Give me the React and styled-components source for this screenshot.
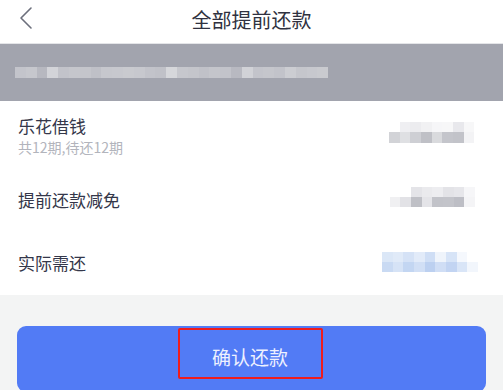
import React from "react";
import styled, { createGlobalStyle } from "styled-components";

const GlobalStyle = createGlobalStyle`
  html, body {
    margin: 0;
    padding: 0;
    background: #f3f4f4;
    font-family: "Noto Sans CJK SC", "Noto Sans", sans-serif;
  }
`;

const Page = styled.div`
  width: 503px;
  height: 390px;
  overflow: hidden;
  background: #f3f4f4;
`;

const Header = styled.div`
  height: 43px;
  background: #fff;
  border-bottom: 1px solid #e4e5e8;
  display: flex;
  align-items: center;
  justify-content: center;
  position: relative;
`;

const BackBtn = styled.div`
  position: absolute;
  left: 17px;
  top: 6px;
  width: 20px;
  height: 24px;
`;

const Title = styled.h1`
  margin: 0;
  font-size: 20px;
  font-weight: 400;
  color: #2f3140;
  line-height: 1;
  padding-bottom: 4px;
`;

const Banner = styled.div`
  height: 57px;
  background: #a2a4ae;
  display: flex;
  align-items: center;
  padding-left: 15px;
`;

const Card = styled.div`
  background: #fff;
  height: 194px;
  padding: 0 18px;
  display: flex;
  flex-direction: column;
`;

const Row = styled.div`
  height: ${(p) => p.h}px;
  display: flex;
  align-items: center;
  justify-content: space-between;
`;

const Label = styled.div`
  display: flex;
  flex-direction: column;
`;

const Name = styled.div`
  font-size: 17px;
  color: #34374a;
  line-height: 22px;
`;

const Sub = styled.div`
  font-size: 14px;
  color: #b2b4bc;
  line-height: 18px;
  margin-top: 1px;
`;

const Footer = styled.div`
  padding: 31px 17px 0;
`;

const ConfirmButton = styled.button`
  width: 469px;
  height: 66px;
  border: none;
  border-radius: 9px;
  background: #527bf5;
  display: flex;
  align-items: center;
  justify-content: center;
  padding: 0;
  font-family: inherit;
`;

const Highlight = styled.span`
  box-sizing: border-box;
  width: 145px;
  height: 51px;
  padding-top: 6px;
  border: 2px solid #ee1c1c;
  border-radius: 2px;
  display: flex;
  align-items: center;
  justify-content: center;
  color: #eef1ff;
  font-size: 19px;
  margin-top: -11px;
  margin-left: -3px;
`;

const MosaicGrid = styled.div`
  display: grid;
  grid-template-columns: repeat(${(p) => p.cols}, ${(p) => p.cw}px);
  grid-auto-rows: ${(p) => p.ch}px;
  filter: blur(0.6px);
  margin-right: ${(p) => p.mr || 0}px;
  margin-top: ${(p) => p.mt || 0}px;
`;

const Cell = styled.div`
  background: ${(p) => p.c};
`;

const Mosaic = ({ rows, cw, ch, mr, mt }) => (
  <MosaicGrid cols={rows[0].length} cw={cw} ch={ch} mr={mr} mt={mt}>
    {rows.flat().map((c, i) => (
      <Cell key={i} c={c} />
    ))}
  </MosaicGrid>
);

const bannerRow = [
  "#c3c4cb", "#c6c7cd", "#b7b8c0", "#d3d4d9", "#c2c3ca", "#c5c6cc", "#c4c5cb",
  "#bfc0c7", "#c6c7cd", "#c7c8ce", "#c9cacf", "#c7c8ce", "#c2c3ca", "#c0c1c8",
  "#d6d7db", "#c6c7cd", "#c4c5cb", "#c0c1c8", "#c4c5cb", "#c2c3ca", "#b8b9c1",
  "#d1d2d7", "#c3c4cb", "#c5c6cc", "#c2c3ca", "#cccdd2", "#c5c6cc", "#c7c8ce",
  "#c9cacf",
];

const W = "#ffffff";

const loanRows = [
  [W, "#efeff2", "#ececef", "#f1f1f3", "#f6f6f8", "#f7f7f8", "#e8e8ec", "#f7f7f8", W],
  ["#d2d3d7", "#dfe0e3", "#cecfd4", "#bfc0c6", "#d9dadd", "#c4c5cb", "#c2c3c9", "#f3f3f5", W],
];

const reliefRows = [
  [W, W, "#e4e4e8", "#eaeaed", "#ededf0", "#e3e3e7", "#e6e6ea", "#f6f6f8"],
  ["#f0f0f2", "#e2e2e6", "#bfc0c6", "#e4e4e8", "#c2c3c9", "#c3c4ca", "#bdbec5", "#f4f4f6"],
];

const dueRows = [
  ["#dbe7f7", "#e0eaf8", "#d5e2f6", "#e2ebf9", "#cfdef5", "#eff4fb", "#d7e4f7", "#f5f8fd", W],
  ["#c9daf3", "#d6e3f6", "#c3d6f2", "#d1dff5", "#bcd0f0", "#d0def5", "#c2d4f2", "#d9e5f7", "#f2f6fc"],
];

const ChevronLeft = () => (
  <svg width="20" height="24" viewBox="0 0 20 24">
    <path
      d="M14 2 L4 12 L14 22"
      fill="none"
      stroke="#6c6f7c"
      strokeWidth="1.6"
      strokeLinecap="round"
      strokeLinejoin="round"
    />
  </svg>
);

export default function App() {
  return (
    <Page>
      <GlobalStyle />
      <Header>
        <BackBtn>
          <ChevronLeft />
        </BackBtn>
        <Title>全部提前还款</Title>
      </Header>
      <Banner>
        <Mosaic rows={[bannerRow]} cw={10.8} ch={11} />
      </Banner>
      <Card>
        <Row h={68}>
          <Label>
            <Name>乐花借钱</Name>
            <Sub>共12期,待还12期</Sub>
          </Label>
          <Mosaic rows={loanRows} cw={10.7} ch={10.5} mr={0} mt={-6} />
        </Row>
        <Row h={62}>
          <Label>
            <Name>提前还款减免</Name>
          </Label>
          <Mosaic rows={reliefRows} cw={10.7} ch={10} mr={10} mt={-6} />
        </Row>
        <Row h={64}>
          <Label>
            <Name>实际需还</Name>
          </Label>
          <Mosaic rows={dueRows} cw={10.7} ch={10} mr={7} mt={-2} />
        </Row>
      </Card>
      <Footer>
        <ConfirmButton>
          <Highlight>确认还款</Highlight>
        </ConfirmButton>
      </Footer>
    </Page>
  );
}
